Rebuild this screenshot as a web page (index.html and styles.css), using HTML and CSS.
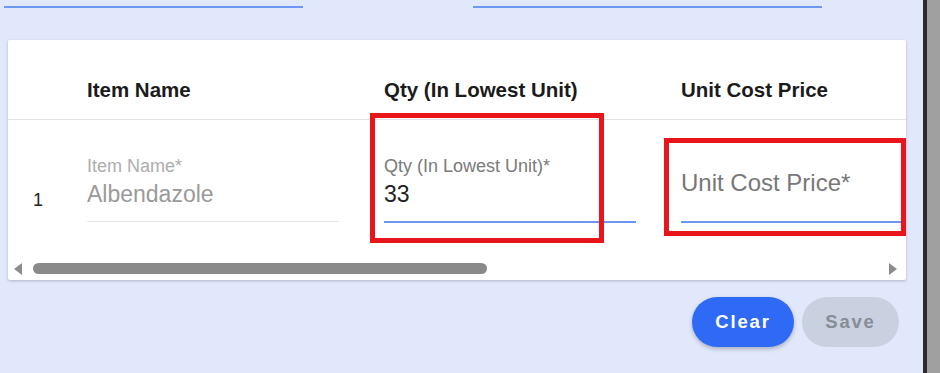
FILE: index.html
```
<!DOCTYPE html>
<html lang="en">
<head>
<meta charset="utf-8">
<title>Stock entry</title>
<link rel="stylesheet" href="styles.css">
</head>
<body>
<div class="screen">
  <div class="main">
    <div class="top-fields">
      <div class="top-line tl-1"></div>
      <div class="top-line tl-2"></div>
    </div>
    <div class="card">
      <div class="thead">
        <div class="col c-idx"></div>
        <div class="col c-item">Item Name</div>
        <div class="col c-qty">Qty (In Lowest Unit)</div>
        <div class="col c-unit">Unit Cost Price</div>
      </div>
      <div class="trow">
        <div class="col c-idx idx">1</div>
        <div class="col c-item">
          <div class="field">
            <div class="lbl lbl-muted">Item Name*</div>
            <div class="val val-muted">Albendazole</div>
            <div class="uline uline-grey"></div>
          </div>
        </div>
        <div class="col c-qty">
          <div class="field">
            <div class="lbl">Qty (In Lowest Unit)*</div>
            <div class="val">33</div>
            <div class="uline uline-blue"></div>
          </div>
        </div>
        <div class="col c-unit">
          <div class="field field-empty">
            <div class="placeholder">Unit Cost Price*</div>
            <div class="uline uline-blue"></div>
          </div>
        </div>
      </div>
      <div class="hscroll">
        <span class="arrow arrow-left"></span>
        <span class="track"><span class="thumb"></span></span>
        <span class="arrow arrow-right"></span>
      </div>
      <div class="mark mark-qty"></div>
      <div class="mark mark-unit"></div>
    </div>
    <div class="actions">
      <button class="btn btn-primary" type="button">Clear</button>
      <button class="btn btn-disabled" type="button" disabled>Save</button>
    </div>
  </div>
  <div class="rule"></div>
  <div class="side"></div>
</div>
</body>
</html>
```
FILE: styles.css
```
* { box-sizing: border-box; }
html, body { margin: 0; padding: 0; }
body {
  width: 940px;
  height: 373px;
  overflow: hidden;
  font-family: "Liberation Sans", Arial, sans-serif;
  background: #e1e8fc;
}
.screen { display: flex; height: 373px; }
.main {
  width: 923px;
  flex-shrink: 0;
  background: #e1e8fc;
  padding-left: 8px;
  display: flex;
  flex-direction: column;
}
.rule { width: 4px; background: #2b2b2b; flex-shrink: 0; }
.side { flex: 1; background: #a0a0a0; }

.top-fields {
  height: 40px;
  display: flex;
  align-items: flex-start;
  padding-top: 6px;
}
.top-line { height: 2px; background: #6c96f0; }
.tl-1 { width: 299px; margin-left: -4px; }
.tl-2 { width: 349px; margin-left: 170px; }

.card {
  width: 898px;
  height: 240px;
  background: #fff;
  border-radius: 2px;
  box-shadow: 0 1px 3px rgba(0,0,0,0.22);
  position: relative;
  overflow: hidden;
  display: flex;
  flex-direction: column;
}
.thead {
  height: 80px;
  border-bottom: 1px solid #e3e3e3;
  display: flex;
  align-items: flex-start;
  padding-top: 38px;
  font-size: 20.5px;
  line-height: 24px;
  font-weight: bold;
  color: #1b1b1b;
  flex-shrink: 0;
}
.col { flex-shrink: 0; white-space: nowrap; }
.c-idx { width: 79px; }
.c-item { width: 297px; }
.c-qty { width: 297px; }
.c-unit { width: 300px; }

.trow {
  height: 140px;
  display: flex;
  flex-shrink: 0;
}
.idx {
  padding-left: 25px;
  padding-top: 70px;
  font-size: 18px;
  line-height: 20px;
  color: #222;
}
.field {
  width: 252px;
  padding-top: 36px;
  position: relative;
}
.field-empty { width: 300px; height: 103px; }
.lbl {
  font-size: 18px;
  line-height: 20px;
  color: #7a7a7a;
}
.lbl-muted { color: #adadad; }
.val {
  margin-top: 4px;
  font-size: 23px;
  line-height: 28px;
  color: #222;
}
.val-muted { color: #9a9a9a; }
.uline { margin-top: 13px; height: 1px; }
.uline-grey { background: #e6e6e6; }
.uline-blue { height: 2px; background: #6b97f3; }
.field-empty .uline { position: absolute; left: 0; right: 0; top: 101px; margin: 0; }
.placeholder {
  position: absolute;
  left: 0;
  top: 49px;
  font-size: 24px;
  line-height: 28px;
  color: #787878;
}

.hscroll {
  height: 17px;
  display: flex;
  align-items: center;
  padding-left: 6px;
  flex-shrink: 0;
}
.arrow { width: 0; height: 0; border-top: 6px solid transparent; border-bottom: 6px solid transparent; }
.arrow-left { border-right: 8px solid #8c8c8c; }
.arrow-right { border-left: 8px solid #8c8c8c; margin-left: 402px; }
.track { display: flex; padding-left: 11px; }
.thumb {
  display: block;
  width: 454px;
  height: 11px;
  border-radius: 6px;
  background: #8a8a8a;
}

.mark {
  position: absolute;
  border: 5px solid #e8161a;
  pointer-events: none;
}
.mark-qty { left: 362px; top: 73px; width: 234px; height: 130px; }
.mark-unit { left: 656px; top: 98px; width: 242px; height: 98px; }

.actions {
  display: flex;
  justify-content: flex-end;
  gap: 8px;
  margin-top: 17px;
  padding-right: 24px;
}
.btn {
  height: 50px;
  border: none;
  border-radius: 25px;
  font-family: "Liberation Sans", Arial, sans-serif;
  font-size: 18.5px;
  font-weight: bold;
  letter-spacing: 1.8px;
  padding: 0;
}
.btn-primary {
  width: 102px;
  background: #2e6af6;
  color: #fff;
  box-shadow: 0 2px 4px rgba(0,0,0,0.25);
}
.btn-disabled {
  width: 97px;
  background: #c9d1e0;
  color: #878c96;
}
```
